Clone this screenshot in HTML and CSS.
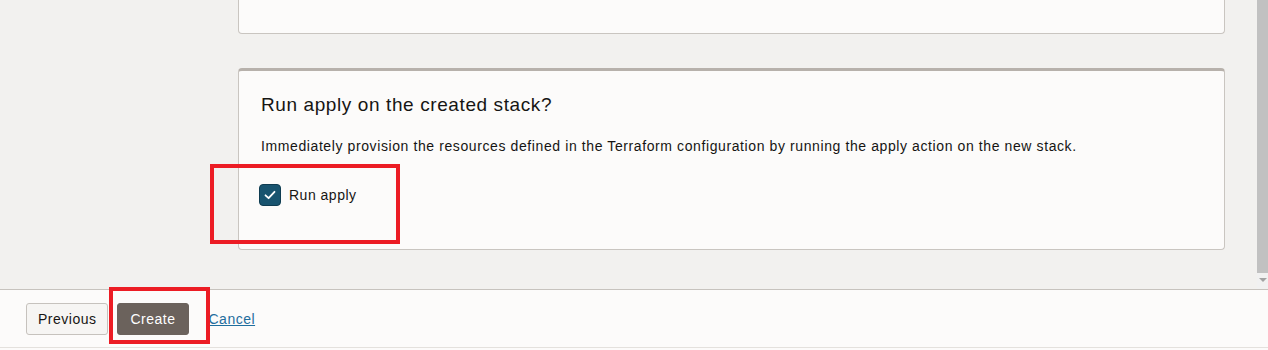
FILE: index.html
```html
<!DOCTYPE html>
<html lang="en">
<head>
    <meta charset="UTF-8">
    <meta name="viewport" content="width=device-width, initial-scale=1.0">
    <title>Create stack - Review</title>
    <link rel="stylesheet" href="styles.css">
</head>
<body>

<div class="scroll-area">
    <div class="content">
        <div class="panel panel-top"></div>

        <div class="panel panel-apply">
            <h3>Run apply on the created stack?</h3>
            <p>Immediately provision the resources defined in the Terraform configuration by running the apply action on the new stack.</p>
            <label class="check">
                <span class="box">
                    <svg width="14" height="14" viewBox="0 0 14 14"><path d="M2.5 7.3 L5.6 10.2 L11.5 3.8" fill="none" stroke="#fff" stroke-width="1.8" stroke-linecap="round" stroke-linejoin="round"/></svg>
                </span>
                Run apply
            </label>
        </div>
    </div>
    <div class="scrollbar">
        <div class="thumb"></div>
        <div class="arrow"></div>
    </div>
</div>

<footer>
    <button class="btn">Previous</button>
    <button class="btn btn-primary">Create</button>
    <a href="#" class="link">Cancel</a>
</footer>

<div class="mark mark-check"></div>
<div class="mark mark-create"></div>

</body>
</html>
```

FILE: styles.css
```css
body {
    font-family: 'Liberation Sans', Arial, sans-serif;
    margin: 0;
    height: 350px;
    background: #fcfbfa;
    color: #161513;
    position: relative;
    overflow: hidden;
    letter-spacing: 0.5px;
}
.scroll-area {
    display: flex;
    height: 289px;
    background-color: #f2f1ef;
}
.content {
    flex: 1;
    padding: 0 32px 0 238px;
}
.panel {
    background-color: #fcfbfa;
    border: 1px solid #c9c5c0;
    border-radius: 4px;
}
.panel-top {
    height: 33px;
    border-top: none;
    border-radius: 0 0 4px 4px;
}
.panel-apply {
    margin-top: 34px;
    height: 178px;
    border-top: 3px solid #b7b1ab;
    padding: 0 22px;
}
.panel-apply h3 {
    font-size: 19px;
    font-weight: normal;
    letter-spacing: 0.6px;
    line-height: 24px;
    margin: 22px 0 0;
}
.panel-apply p {
    font-size: 14px;
    letter-spacing: 0.6px;
    line-height: 20px;
    margin: 19px 0 0;
}
.check {
    display: flex;
    align-items: center;
    gap: 8px;
    font-size: 14px;
    margin-top: 28px;
    margin-left: -2px;
}
.box {
    width: 20px;
    height: 20px;
    background-color: #18546f;
    border: 1px solid #0f3c51;
    border-radius: 4px;
    display: flex;
    align-items: center;
    justify-content: center;
}
.scrollbar {
    width: 11px;
    display: flex;
    flex-direction: column;
    background-color: #f1f1f1;
}
.thumb {
    height: 273px;
    background-color: #c1c1c1;
}
.arrow {
    margin: 5px auto 0;
    width: 0;
    height: 0;
    border-left: 4px solid transparent;
    border-right: 4px solid transparent;
    border-top: 4px solid #a3a3a3;
}
footer {
    height: 57px;
    border-top: 1px solid #c7c3be;
    border-bottom: 1px solid #e4e1dd;
    display: flex;
    align-items: center;
    padding-left: 26px;
    gap: 9px;
    background-color: #fcfbfa;
}
.btn {
    font-family: inherit;
    font-size: 14px;
    letter-spacing: 0.5px;
    height: 32px;
    padding: 0 11px;
    border: 1px solid #c6c2bd;
    border-radius: 3px;
    background-color: #f6f5f3;
    color: #161513;
}
.btn-primary {
    background-color: #6b625c;
    border-color: #6b625c;
    color: #fff;
    padding: 0 12px;
}
.link {
    font-size: 14px;
    color: #1f6e9e;
    margin-left: 11px;
}
.mark {
    position: absolute;
    border: 4px solid #ec1c24;
}
.mark-check {
    left: 210px;
    top: 164px;
    width: 182px;
    height: 72px;
}
.mark-create {
    left: 109px;
    top: 287px;
    width: 93px;
    height: 49px;
}
```
